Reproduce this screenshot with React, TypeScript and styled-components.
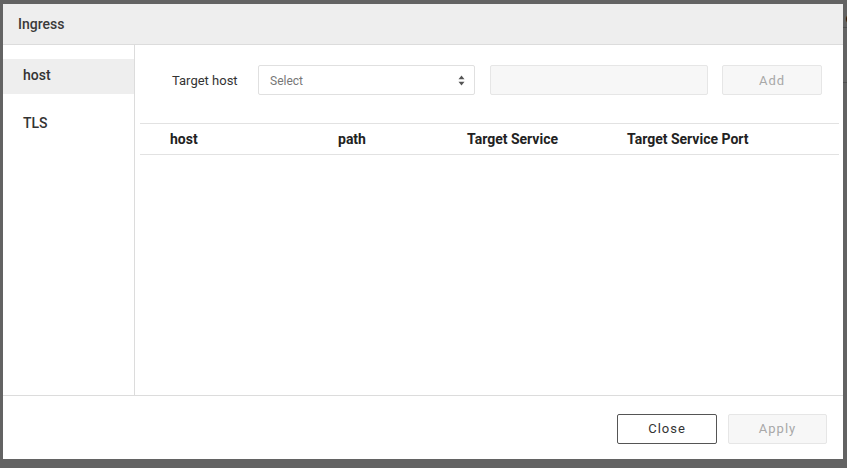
import React from "react";
import styled, { createGlobalStyle } from "styled-components";

const Global = createGlobalStyle`
  html, body { margin: 0; padding: 0; }
  body {
    width: 847px; height: 468px; overflow: hidden;
    font-family: Roboto, "Liberation Sans", Arial, sans-serif;
    background: #ffffff;
  }
`;

const Page = styled.div`
  position: relative;
  width: 847px;
  height: 468px;
  overflow: hidden;
`;

const UnderPage = styled.div`
  display: flex;
  flex-direction: column;
  align-items: flex-end;
  padding-top: 8px;
  color: #222;
  font-size: 14px;
`;

const UnderRow = styled.div<{ $h: number }>`
  height: ${(p) => p.$h}px;
  width: 100%;
  border-bottom: 1px solid #ccc;
  display: flex;
  justify-content: flex-end;
  align-items: center;
  margin-right: -6px;
`;

const Backdrop = styled.div`
  position: absolute;
  inset: 0;
  background: rgba(0, 0, 0, 0.61);
  padding: 4px 0 0 3px;
`;

const Modal = styled.div`
  width: 840px;
  height: 455px;
  background: #fff;
  display: flex;
  flex-direction: column;
`;

const Header = styled.div`
  height: 40px;
  flex: none;
  background: #eeeeee;
  border-bottom: 1px solid #dcdcdc;
  display: flex;
  align-items: center;
  padding-left: 15px;
  font-size: 14px;
  font-weight: 500;
  color: #3a3a3a;
`;

const Body = styled.div`
  flex: 1;
  display: flex;
  border-bottom: 1px solid #dcdcdc;
  min-height: 0;
`;

const Sidebar = styled.div`
  width: 131px;
  flex: none;
  border-right: 1px solid #dcdcdc;
  padding-top: 14px;
  display: flex;
  flex-direction: column;
  gap: 13px;
`;

const SideItem = styled.div<{ $active?: boolean }>`
  height: 35px;
  box-sizing: border-box;
  padding-bottom: 3px;
  display: flex;
  align-items: center;
  padding-left: 20px;
  font-size: 14px;
  font-weight: 500;
  color: #333;
  background: ${(p) => (p.$active ? "#eeeeee" : "transparent")};
`;

const Content = styled.div`
  flex: 1;
  padding: 20px 4px 0 5px;
  display: flex;
  flex-direction: column;
`;

const FormRow = styled.div`
  display: flex;
  align-items: center;
  padding-left: 32px;
  height: 30px;
`;

const Label = styled.div`
  font-size: 13px;
  color: #333;
  width: 86px;
`;

const SelectBox = styled.div`
  box-sizing: border-box;
  width: 217px;
  height: 30px;
  border: 1px solid #e0e0e0;
  border-radius: 2px;
  display: flex;
  align-items: center;
  justify-content: space-between;
  padding: 1px 9px 0 11px;
  font-size: 12px;
  color: #777;
  margin-right: 15px;
`;

const TextInput = styled.div`
  box-sizing: border-box;
  width: 218px;
  height: 30px;
  background: #f7f7f7;
  border: 1px solid #e6e6e6;
  border-radius: 2px;
  margin-right: 14px;
`;

const Button = styled.button<{ $variant: "primary" | "disabled"; $w?: number }>`
  box-sizing: border-box;
  width: ${(p) => p.$w ?? 100}px;
  height: 30px;
  border-radius: 2px;
  font-family: Roboto, "Liberation Sans", Arial, sans-serif;
  font-size: 13px;
  font-weight: 400;
  letter-spacing: 1px;
  cursor: pointer;
  background: ${(p) => (p.$variant === "primary" ? "#ffffff" : "#f7f7f7")};
  border: 1px solid ${(p) => (p.$variant === "primary" ? "#555555" : "#e6e6e6")};
  color: ${(p) => (p.$variant === "primary" ? "#333333" : "#a8a8a8")};
`;

const Table = styled.div`
  margin-top: 28px;
  border-top: 1px solid #e2e2e2;
`;

const HeadRow = styled.div`
  display: grid;
  grid-template-columns: 168px 129px 160px 1fr;
  height: 30px;
  align-items: center;
  padding-left: 30px;
  border-bottom: 1px solid #e2e2e2;
  font-size: 14px;
  font-weight: 700;
  color: #222;
`;

const Footer = styled.div`
  height: 63px;
  flex: none;
  display: flex;
  justify-content: flex-end;
  align-items: center;
  gap: 11px;
  padding-right: 16px;
  padding-top: 2px;
  box-sizing: border-box;
`;

const Arrows = () => (
  <svg width="7" height="11" viewBox="0 0 7 11">
    <path d="M3.5 0.5 L6.5 4.2 H0.5 Z" fill="#555" />
    <path d="M3.5 10.5 L6.5 6.8 H0.5 Z" fill="#555" />
  </svg>
);

export default function App() {
  return (
    <Page>
      <Global />
      <UnderPage>
        <UnderRow $h={19}>e</UnderRow>
        <UnderRow $h={54}>[</UnderRow>
      </UnderPage>
      <Backdrop>
        <Modal>
          <Header>Ingress</Header>
          <Body>
            <Sidebar>
              <SideItem $active>host</SideItem>
              <SideItem>TLS</SideItem>
            </Sidebar>
            <Content>
              <FormRow>
                <Label>Target host</Label>
                <SelectBox>
                  <span>Select</span>
                  <Arrows />
                </SelectBox>
                <TextInput />
                <Button $variant="disabled">Add</Button>
              </FormRow>
              <Table>
                <HeadRow>
                  <span>host</span>
                  <span>path</span>
                  <span>Target Service</span>
                  <span>Target Service Port</span>
                </HeadRow>
              </Table>
            </Content>
          </Body>
          <Footer>
            <Button $variant="primary">Close</Button>
            <Button $variant="disabled" $w={99}>Apply</Button>
          </Footer>
        </Modal>
      </Backdrop>
    </Page>
  );
}
